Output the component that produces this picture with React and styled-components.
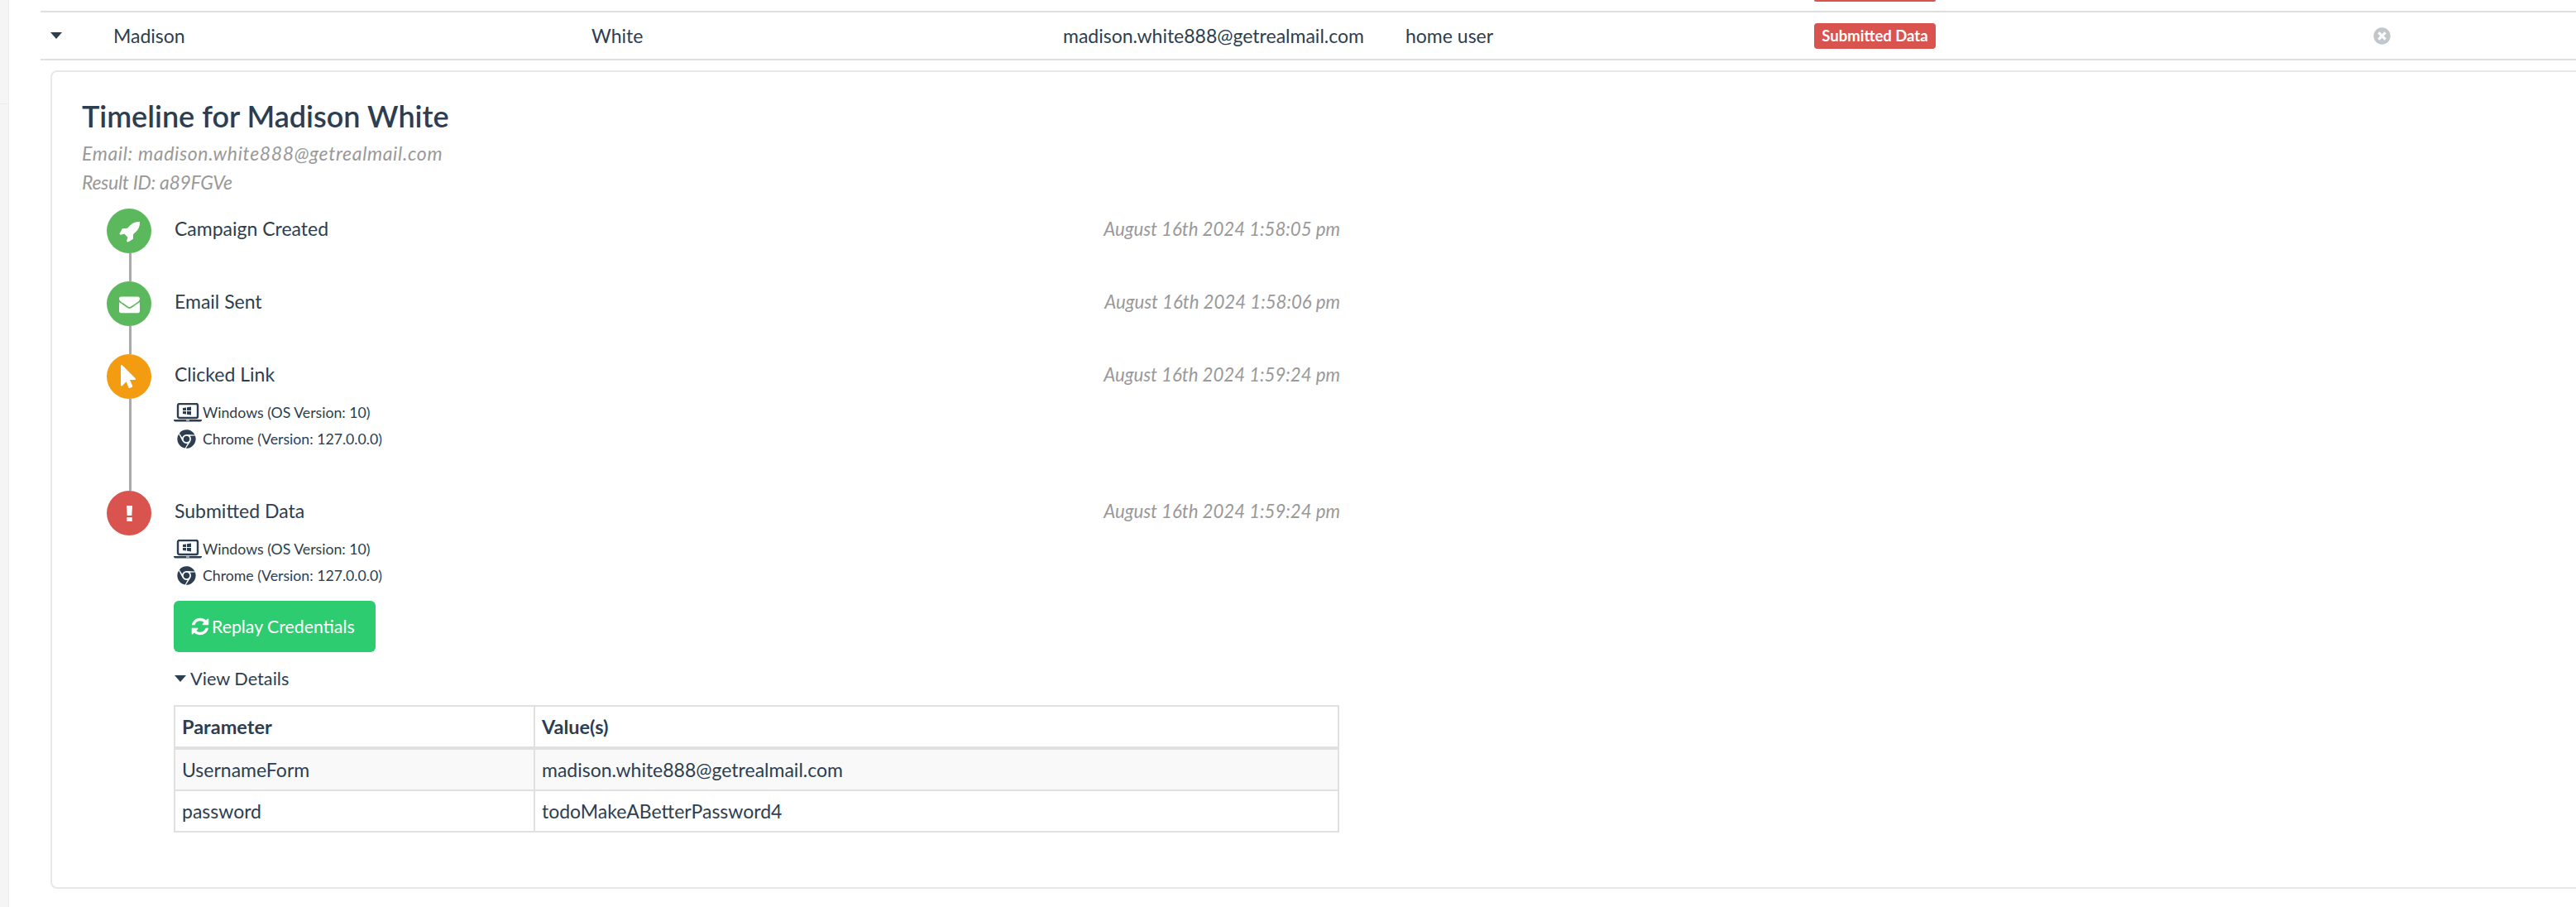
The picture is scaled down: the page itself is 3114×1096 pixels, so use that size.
import React from 'react';
import styled, { createGlobalStyle } from 'styled-components';
import { FaChrome, FaTimesCircle } from 'react-icons/fa';

const GlobalStyle = createGlobalStyle`
  html, body {
    margin: 0;
    padding: 0;
    background: #fff;
    overflow: hidden;
  }
  body {
    font-family: "Lato", "Liberation Sans", sans-serif;
    color: #2c3e50;
  }
`;

const Page = styled.div`
  display: flex;
  width: 3114px;
  height: 1096px;
  overflow: hidden;
`;

const SideStrip = styled.div`
  flex: 0 0 11px;
  box-sizing: border-box;
  background: #f5f5f5;
  border-right: 1px solid #eee;
`;

const StripDivider = styled.div`
  height: 125px;
  border-bottom: 1px solid #ececec;
`;

const Main = styled.div`
  flex: 1;
  min-width: 0;
  padding-left: 38px;
`;

const ROW_COLUMNS = '88px 578px 570px 414px 494px 675px 1fr';

const PrevRow = styled.div`
  display: grid;
  grid-template-columns: ${ROW_COLUMNS};
  height: 13px;
`;

const BadgeSliver = styled.div`
  grid-column: 6;
  width: 147px;
  height: 2px;
  background: #d9534f;
  border-radius: 0 0 4px 4px;
`;

const Row = styled.div`
  display: grid;
  grid-template-columns: ${ROW_COLUMNS};
  align-items: center;
  height: 56px;
  border-top: 2px solid #dfdfdf;
  border-bottom: 2px solid #dfdfdf;
  font-size: 23px;
`;

const Caret = styled.span`
  display: block;
  width: 0;
  height: 0;
  border-left: 7px solid transparent;
  border-right: 7px solid transparent;
  border-top: 8px solid #2c3e50;
  margin-left: ${(p) => p.$indent || 0}px;
`;

const Badge = styled.span`
  display: inline-block;
  width: 147px;
  height: 31px;
  line-height: 30px;
  text-align: center;
  background: #d9534f;
  color: #fff;
  font-size: 18.5px;
  font-weight: 700;
  border-radius: 4px;
`;

const DeleteIcon = styled(FaTimesCircle)`
  display: block;
  width: 21px;
  height: 21px;
  color: #c2c7cc;
  margin-left: 1px;
`;

const Card = styled.div`
  margin: 12px -40px 0 12px;
  padding: 33px 0 66px 36px;
  border: 2px solid #e8e8e8;
  border-radius: 8px;
`;

const Title = styled.h2`
  margin: 0 0 8px;
  font-size: 36px;
  line-height: 40px;
  font-weight: 600;
`;

const Meta = styled.div`
  font-size: 23px;
  line-height: 35px;
  font-style: italic;
  color: #999;
  letter-spacing: ${(p) => p.$spacing || 0}px;
`;

const Timeline = styled.div`
  width: 1491px;
  margin: 14px 0 0 30px;
`;

const Event = styled.div`
  display: flex;
  gap: 28px;
`;

const Marker = styled.div`
  flex: 0 0 54px;
  display: flex;
  flex-direction: column;
  align-items: center;
`;

const Circle = styled.div`
  flex: 0 0 54px;
  width: 54px;
  display: flex;
  align-items: center;
  justify-content: center;
  border-radius: 50%;
  color: #fff;
  background: ${(p) => p.$color};
`;

const Connector = styled.div`
  flex: 1;
  width: 3px;
  margin-left: 2px;
  background: #aaa;
`;

const EventBody = styled.div`
  flex: 1;
  min-width: 0;
  padding-bottom: ${(p) => (p.$last ? 0 : 40)}px;
`;

const EventHead = styled.div`
  display: flex;
  justify-content: space-between;
  height: 48px;
  line-height: 49px;
  font-size: 23px;
`;

const Stamp = styled.span`
  font-size: 22.200px;
  font-style: italic;
  color: #999;
`;

const Client = styled.div`
  margin: 6px 0 ${(p) => p.$after}px;
`;

const ClientLine = styled.div`
  display: flex;
  align-items: center;
  height: 32px;
  font-size: 17.700px;
`;

const ClientIcon = styled.span`
  flex: 0 0 35px;
  display: flex;
  justify-content: ${(p) => (p.$center ? 'center' : 'flex-start')};
  padding-right: ${(p) => (p.$center ? 5 : 0)}px;
  box-sizing: border-box;
  font-size: 23px;
  margin-left: -1px;
`;

const ReplayButton = styled.button`
  display: flex;
  align-items: center;
  gap: 2px;
  width: 244px;
  height: 62px;
  margin: 15px 0 0 -1px;
  padding: 0 0 0 20px;
  border: none;
  border-radius: 6px;
  background: #2ecc71;
  color: #fff;
  font: inherit;
  font-size: 21.300px;
`;

const ViewDetails = styled.div`
  display: flex;
  align-items: center;
  gap: 5px;
  height: 32px;
  margin-top: 16px;
  font-size: 21.700px;
`;

const ParamTable = styled.table`
  width: 1409px;
  margin: 16px 0 0 -1px;
  border-collapse: collapse;
  table-layout: fixed;
  font-size: 23px;

  th, td {
    border: 2px solid #e0e0e0;
    padding: 0 0 0 8px;
    text-align: left;
  }
  th {
    height: 48px;
    border-bottom-width: 4px;
    font-size: 23.500px;
    font-weight: 700;
  }
  td {
    height: 48px;
  }
  tbody tr:nth-child(odd) td {
    background: #f9f9f9;
  }
`;

const Glyph = ({ size, d }) => (
  <svg width={size} height={size} viewBox="0 0 1792 1792" fill="currentColor">
    <path d={d} />
  </svg>
);

const ROCKET = 'M1728 160q0 249-75.500 430.500t-253.500 360.500q-81 80-195 176l-20 379q-2 16-16 26l-384 224q-7 4-16 4-12 0-23-9l-64-64q-13-14-8-32l85-276-281-281-276 85q-3 1-9 1-14 0-23-9l-64-64q-17-19-5-39l224-384q10-14 26-16l379-20q96-114 176-195 188-187 358-258t431-71q14 0 24 9.500t10 22.500z';
const ENVELOPE = 'M1792 710v794q0 66-47 113t-113 47h-1472q-66 0-113-47t-47-113v-794q44 49 101 87 362 246 497 345 57 42 92.500 65.500t94.500 48 110 24.500h2q51 0 110-24.500t94.500-48 92.500-65.500q170-123 498-345 57-39 100-87zm0-294q0 79-49 151t-122 123q-376 261-468 325-10 7-42.500 30.500t-54 38-52 32.500-57.500 27-50 9h-2q-23 0-50-9t-57.500-27-52-32.500-54-38-42.500-30.500q-91-64-262-182.500t-205-142.500q-62-42-117-115.500t-55-136.500q0-78 41.500-130t118.500-52h1472q65 0 112.500 47t47.500 113z';
const POINTER = 'M1389 1043q31 30 14 69-17 40-59 40h-382l201 476q10 25 0 49t-34 35l-177 75q-25 10-49 0t-35-34l-191-452-312 312q-19 19-45 19-12 0-24-5-40-17-40-59v-1504q0-42 40-59 12-5 24-5 27 0 45 19z';
const REFRESH = 'M1639 1056q0 5-1 7-64 268-268 434.500t-478 166.500q-146 0-282.500-55t-243.500-157l-129 129q-19 19-45 19t-45-19-19-45v-448q0-26 19-45t45-19h448q26 0 45 19t19 45-19 45l-137 137q71 66 161 102t187 36q134 0 250-65t186-179q11-17 53-117 8-23 30-23h192q13 0 22.500 9.500t9.500 22.500zm25-800v448q0 26-19 45t-45 19h-448q-26 0-45-19t-19-45 19-45l138-138q-148-137-349-137-134 0-250 65t-186 179q-11 17-53 117-8 23-30 23h-199q-13 0-22.500-9.500t-9.500-22.500v-7q65-268 270-434.500t480-166.500q146 0 284 55.500t245 156.500l130-129q19-19 45-19t45 19 19 45z';

const LaptopIcon = () => (
  <svg width="34" height="23" viewBox="0 0 34 23" fill="none">
    <rect x="5" y="1" width="24" height="17" rx="2" stroke="#2c3e50" strokeWidth="2.400" />
    <path d="M11 6l4-.6V9h-4zM16 5.300l5-.8V9h-5zM11 10h4v3.600l-4-.6zM16 10h5v4.500l-5-.8z" fill="#2c3e50" />
    <path d="M0 20h34v.5c0 1.200-1 2-2 2H2c-1 0-2-.8-2-2z" fill="#2c3e50" />
    <path d="M15 21h4" stroke="#fff" strokeWidth="1" />
  </svg>
);

const ExclamationIcon = () => (
  <svg width="7" height="19" viewBox="0 0 7 19" fill="currentColor">
    <path d="M0 0h7l-.7 12H.7zM.3 14h6.400v5H.3z" />
  </svg>
);

const ClientInfo = ({ after }) => (
  <Client $after={after}>
    <ClientLine>
      <ClientIcon><LaptopIcon /></ClientIcon>
      Windows (OS Version: 10)
    </ClientLine>
    <ClientLine>
      <ClientIcon $center><FaChrome /></ClientIcon>
      Chrome (Version: 127.0.0.0)
    </ClientLine>
  </Client>
);

export default function App() {
  return (
    <>
      <GlobalStyle />
      <Page>
        <SideStrip><StripDivider /></SideStrip>
        <Main>
          <PrevRow>
            <BadgeSliver />
          </PrevRow>
          <Row>
            <Caret $indent={12} />
            <span>Madison</span>
            <span>White</span>
            <span>madison.white888@getrealmail.com</span>
            <span>home user</span>
            <span><Badge>Submitted Data</Badge></span>
            <DeleteIcon />
          </Row>
          <Card>
            <Title>Timeline for Madison White</Title>
            <Meta $spacing={0.65}>Email: madison.white888@getrealmail.com</Meta>
            <Meta $spacing={-0.3}>Result ID: a89FGVe</Meta>
            <Timeline>
              <Event>
                <Marker>
                  <Circle $color="#5cb85c"><Glyph size={27} d={ROCKET} /></Circle>
                  <Connector />
                </Marker>
                <EventBody>
                  <EventHead>
                    <span>Campaign Created</span>
                    <Stamp>August 16th 2024 1:58:05 pm</Stamp>
                  </EventHead>
                </EventBody>
              </Event>
              <Event>
                <Marker>
                  <Circle $color="#5cb85c"><Glyph size={25} d={ENVELOPE} /></Circle>
                  <Connector />
                </Marker>
                <EventBody>
                  <EventHead>
                    <span>Email Sent</span>
                    <Stamp>August 16th 2024 1:58:06 pm</Stamp>
                  </EventHead>
                </EventBody>
              </Event>
              <Event>
                <Marker>
                  <Circle $color="#f39c12"><Glyph size={28} d={POINTER} /></Circle>
                  <Connector />
                </Marker>
                <EventBody>
                  <EventHead>
                    <span>Clicked Link</span>
                    <Stamp>August 16th 2024 1:59:24 pm</Stamp>
                  </EventHead>
                  <ClientInfo after={7} />
                </EventBody>
              </Event>
              <Event>
                <Marker>
                  <Circle $color="#d9534f"><ExclamationIcon /></Circle>
                </Marker>
                <EventBody $last>
                  <EventHead>
                    <span>Submitted Data</span>
                    <Stamp>August 16th 2024 1:59:24 pm</Stamp>
                  </EventHead>
                  <ClientInfo after={0} />
                  <ReplayButton><Glyph size={24} d={REFRESH} />Replay Credentials</ReplayButton>
                  <ViewDetails><Caret />View Details</ViewDetails>
                  <ParamTable>
                    <colgroup>
                      <col style={{ width: 435 }} />
                      <col />
                    </colgroup>
                    <thead>
                      <tr>
                        <th>Parameter</th>
                        <th>Value(s)</th>
                      </tr>
                    </thead>
                    <tbody>
                      <tr>
                        <td>UsernameForm</td>
                        <td>madison.white888@getrealmail.com</td>
                      </tr>
                      <tr>
                        <td>password</td>
                        <td>todoMakeABetterPassword4</td>
                      </tr>
                    </tbody>
                  </ParamTable>
                </EventBody>
              </Event>
            </Timeline>
          </Card>
        </Main>
      </Page>
    </>
  );
}
